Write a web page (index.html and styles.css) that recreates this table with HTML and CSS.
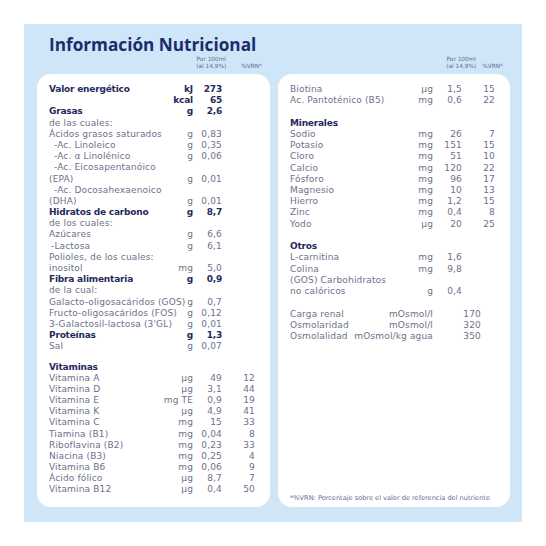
FILE: index.html
```html
<!DOCTYPE html>
<html>
<head>
  <meta name="viewport" content="width=device-width, initial-scale=1.0">
  <link rel="stylesheet" href="styles.css">
</head>
<body>
  <div class="panel">
    <h1 class="title">Información Nutricional</h1>

    <div class="cols">
      <!-- left column -->
      <div class="col">
        <div class="head head-left">
          <span class="per">Por 100ml<br>(al 14,9%)</span>
          <span class="vrn">%VRN*</span>
        </div>
        <div class="card">
          <div class="row b"><span class="name">Valor energético</span><span class="unit">kJ</span><span class="val">273</span><span class="pct"></span></div>
          <div class="row b"><span class="name"></span><span class="unit">kcal</span><span class="val">65</span><span class="pct"></span></div>
          <div class="row b"><span class="name">Grasas</span><span class="unit">g</span><span class="val">2,6</span><span class="pct"></span></div>
          <div class="row"><span class="name">de las cuales:</span></div>
          <div class="row"><span class="name">Ácidos grasos saturados</span><span class="unit">g</span><span class="val">0,83</span><span class="pct"></span></div>
          <div class="row ind"><span class="name">-Ac. Linoleico</span><span class="unit">g</span><span class="val">0,35</span><span class="pct"></span></div>
          <div class="row ind"><span class="name">-Ac. α Linolénico</span><span class="unit">g</span><span class="val">0,06</span><span class="pct"></span></div>
          <div class="row ind"><span class="name">-Ac. Eicosapentanóico</span></div>
          <div class="row"><span class="name">(EPA)</span><span class="unit">g</span><span class="val">0,01</span><span class="pct"></span></div>
          <div class="row ind"><span class="name">-Ac. Docosahexaenoico</span></div>
          <div class="row"><span class="name">(DHA)</span><span class="unit">g</span><span class="val">0,01</span><span class="pct"></span></div>
          <div class="row b"><span class="name">Hidratos de carbono</span><span class="unit">g</span><span class="val">8,7</span><span class="pct"></span></div>
          <div class="row"><span class="name">de los cuales:</span></div>
          <div class="row"><span class="name">Azúcares</span><span class="unit">g</span><span class="val">6,6</span><span class="pct"></span></div>
          <div class="row ind-s"><span class="name">-Lactosa</span><span class="unit">g</span><span class="val">6,1</span><span class="pct"></span></div>
          <div class="row"><span class="name">Polioles, de los cuales:</span></div>
          <div class="row"><span class="name">inositol</span><span class="unit">mg</span><span class="val">5,0</span><span class="pct"></span></div>
          <div class="row b"><span class="name">Fibra alimentaria</span><span class="unit">g</span><span class="val">0,9</span><span class="pct"></span></div>
          <div class="row"><span class="name">de la cual:</span></div>
          <div class="row"><span class="name">Galacto-oligosacáridos (GOS)</span><span class="unit">g</span><span class="val">0,7</span><span class="pct"></span></div>
          <div class="row"><span class="name">Fructo-oligosacáridos (FOS)</span><span class="unit">g</span><span class="val">0,12</span><span class="pct"></span></div>
          <div class="row"><span class="name">3-Galactosil-lactosa (3'GL)</span><span class="unit">g</span><span class="val">0,01</span><span class="pct"></span></div>
          <div class="row b"><span class="name">Proteínas</span><span class="unit">g</span><span class="val">1,3</span><span class="pct"></span></div>
          <div class="row"><span class="name">Sal</span><span class="unit">g</span><span class="val">0,07</span><span class="pct"></span></div>

          <div class="group tight">
            <div class="row b"><span class="name">Vitaminas</span></div>
            <div class="row"><span class="name">Vitamina A</span><span class="unit">µg</span><span class="val">49</span><span class="pct">12</span></div>
            <div class="row"><span class="name">Vitamina D</span><span class="unit">µg</span><span class="val">3,1</span><span class="pct">44</span></div>
            <div class="row"><span class="name">Vitamina E</span><span class="unit">mg TE</span><span class="val">0,9</span><span class="pct">19</span></div>
            <div class="row"><span class="name">Vitamina K</span><span class="unit">µg</span><span class="val">4,9</span><span class="pct">41</span></div>
            <div class="row"><span class="name">Vitamina C</span><span class="unit">mg</span><span class="val">15</span><span class="pct">33</span></div>
            <div class="row"><span class="name">Tiamina (B1)</span><span class="unit">mg</span><span class="val">0,04</span><span class="pct">8</span></div>
            <div class="row"><span class="name">Riboflavina (B2)</span><span class="unit">mg</span><span class="val">0,23</span><span class="pct">33</span></div>
            <div class="row"><span class="name">Niacina (B3)</span><span class="unit">mg</span><span class="val">0,25</span><span class="pct">4</span></div>
            <div class="row"><span class="name">Vitamina B6</span><span class="unit">mg</span><span class="val">0,06</span><span class="pct">9</span></div>
            <div class="row"><span class="name">Ácido fólico</span><span class="unit">µg</span><span class="val">8,7</span><span class="pct">7</span></div>
            <div class="row"><span class="name">Vitamina B12</span><span class="unit">µg</span><span class="val">0,4</span><span class="pct">50</span></div>
          </div>
        </div>
      </div>

      <!-- right column -->
      <div class="col">
        <div class="head head-right">
          <span class="per">Por 100ml<br>(al 14,9%)</span>
          <span class="vrn">%VRN*</span>
        </div>
        <div class="card">
          <div class="row"><span class="name">Biotina</span><span class="unit">µg</span><span class="val">1,5</span><span class="pct">15</span></div>
          <div class="row"><span class="name">Ac. Pantoténico (B5)</span><span class="unit">mg</span><span class="val">0,6</span><span class="pct">22</span></div>

          <div class="group">
            <div class="row b"><span class="name">Minerales</span></div>
            <div class="row"><span class="name">Sodio</span><span class="unit">mg</span><span class="val">26</span><span class="pct">7</span></div>
            <div class="row"><span class="name">Potasio</span><span class="unit">mg</span><span class="val">151</span><span class="pct">15</span></div>
            <div class="row"><span class="name">Cloro</span><span class="unit">mg</span><span class="val">51</span><span class="pct">10</span></div>
            <div class="row"><span class="name">Calcio</span><span class="unit">mg</span><span class="val">120</span><span class="pct">22</span></div>
            <div class="row"><span class="name">Fósforo</span><span class="unit">mg</span><span class="val">96</span><span class="pct">17</span></div>
            <div class="row"><span class="name">Magnesio</span><span class="unit">mg</span><span class="val">10</span><span class="pct">13</span></div>
            <div class="row"><span class="name">Hierro</span><span class="unit">mg</span><span class="val">1,2</span><span class="pct">15</span></div>
            <div class="row"><span class="name">Zinc</span><span class="unit">mg</span><span class="val">0,4</span><span class="pct">8</span></div>
            <div class="row"><span class="name">Yodo</span><span class="unit">µg</span><span class="val">20</span><span class="pct">25</span></div>
          </div>

          <div class="group">
            <div class="row b"><span class="name">Otros</span></div>
            <div class="row"><span class="name">L-carnitina</span><span class="unit">mg</span><span class="val">1,6</span><span class="pct"></span></div>
            <div class="row"><span class="name">Colina</span><span class="unit">mg</span><span class="val">9,8</span><span class="pct"></span></div>
            <div class="row"><span class="name">(GOS) Carbohidratos</span></div>
            <div class="row"><span class="name">no calóricos</span><span class="unit">g</span><span class="val">0,4</span><span class="pct"></span></div>
          </div>

          <div class="group osm">
            <div class="row"><span class="name">Carga renal</span><span class="unit">mOsmol/l</span><span class="val">170</span></div>
            <div class="row"><span class="name">Osmolaridad</span><span class="unit">mOsmol/l</span><span class="val">320</span></div>
            <div class="row"><span class="name">Osmolalidad</span><span class="unit">mOsmol/kg agua</span><span class="val">350</span></div>
          </div>

          <p class="note">*%VRN: Porcentaje sobre el valor de referencia del nutriente</p>
        </div>
      </div>
    </div>
  </div>
</body>
</html>
```

FILE: styles.css
```css
    body {
      margin: 0;
      padding: 0;
      background-color: #fff;
      font-family: "DejaVu Sans", sans-serif;
    }

    .panel {
      box-sizing: border-box;
      width: 498px;
      height: 498px;
      margin: 24px;
      padding: 11px 12px 15px 13px;
      background-color: #cfe5f8;
      display: flex;
      flex-direction: column;
    }

    .title {
      margin: 0;
      padding-left: 12px;
      font-family: "Open Sans", sans-serif;
      font-size: 17.2px;
      line-height: 20px;
      font-weight: 700;
      color: #1b2c6d;
    }

    .cols {
      flex: 1;
      display: grid;
      grid-template-columns: 233px 232px;
      gap: 8px;
    }

    .col {
      display: flex;
      flex-direction: column;
    }

    /* column headers above each card */
    .head {
      height: 19px;
      display: flex;
      justify-content: flex-end;
      align-items: flex-end;
      padding-bottom: 4px;
      box-sizing: border-box;
      font-size: 5.8px;
      line-height: 7px;
      color: #5f6d93;
    }

    .head .per {
      text-align: center;
    }

    .head-left {
      padding-right: 8px;
    }

    .head-left .per {
      margin-right: 15px;
    }

    .head-right {
      padding-right: 7px;
    }

    .head-right .per {
      margin-right: 6px;
    }

    .card {
      flex: 1;
      display: flex;
      flex-direction: column;
      background-color: #fff;
      border-radius: 14px;
      padding: 10px 15px 5px 12px;
      font-size: 9px;
      letter-spacing: 0.15px;
      color: #6d7189;
    }

    .row {
      flex-shrink: 0;
      display: flex;
      height: 11.2px;
      line-height: 11.2px;
      white-space: nowrap;
    }

    .row .name {
      flex: 1;
    }

    .row .unit {
      text-align: right;
    }

    .row .val {
      width: 29px;
      text-align: right;
    }

    .row .pct {
      width: 33px;
      text-align: right;
    }

    .row.b {
      font-weight: bold;
      letter-spacing: -0.2px;
      color: #1f2a5c;
    }

    .row.ind .name {
      padding-left: 5px;
    }

    .row.ind-s .name {
      padding-left: 2px;
    }

    .group {
      flex-shrink: 0;
      margin-top: 11.5px;
    }

    .group.tight {
      margin-top: 9.5px;
    }

    .group.tight .row {
      height: 11.1px;
      line-height: 11.1px;
    }

    .group.osm .row {
      padding-right: 14px;
    }

    .group.osm .val {
      width: 48px;
    }

    .note {
      margin: auto -8px 0 0;
      font-size: 6.6px;
      letter-spacing: 0;
      line-height: 8px;
      white-space: nowrap;
      color: #5f6d93;
    }
```
